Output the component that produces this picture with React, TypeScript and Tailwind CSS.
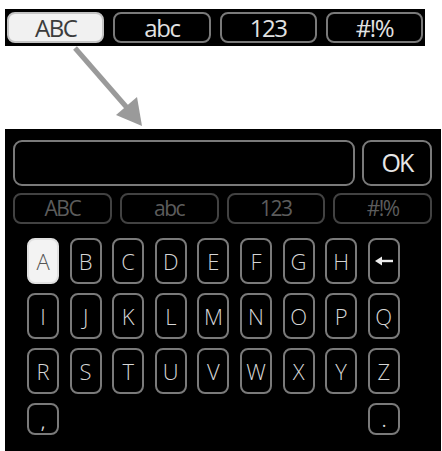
// On-screen keyboard: mode tabs on top, arrow pointing into the keypad panel

const TOP_TABS = ["ABC", "abc", "123", "#!%"]

const ROWS = [
  ["A", "B", "C", "D", "E", "F", "G", "H", "←"],
  ["I", "J", "K", "L", "M", "N", "O", "P", "Q"],
  ["R", "S", "T", "U", "V", "W", "X", "Y", "Z"],
]

const font = { fontFamily: '"Open Sans", "Liberation Sans", sans-serif' }

function BackArrow() {
  return (
    <svg width="20" height="12" viewBox="0 0 20 12">
      <line x1="7" y1="6" x2="19" y2="6" stroke="#ececec" strokeWidth="2.4" />
      <polygon points="1,6 8,1.5 8,10.5" fill="#ececec" />
    </svg>
  )
}

function Key({ label, active }: { label: string; active?: boolean }) {
  return (
    <div
      className={
        active
          ? "flex h-[46px] w-[32px] items-center justify-center rounded-[8px] border-2 border-[#e0e0e0] bg-[#f3f3f3] text-[22px] font-light text-[#555]"
          : "flex h-[46px] w-[32px] items-center justify-center rounded-[8px] border-2 border-[#7a7a7a] text-[22px] font-light text-[#d6d6d6]"
      }
    >
      {label === "←" ? <BackArrow /> : label}
    </div>
  )
}

export default function App() {
  return (
    <main className="h-[451px] w-[442px] overflow-hidden bg-white antialiased" style={font}>
      {/* top mode bar */}
      <div className="ml-[5px] mt-[9px] grid h-[37px] w-[420px] grid-cols-4 gap-[9px] bg-black px-[2px] pt-[3px]">
        {TOP_TABS.map((t, i) => (
          <div
            key={t}
            className={
              i === 0
                ? "flex h-[31px] items-center justify-center rounded-[8px] border-2 border-[#c4c4c4] bg-[#f1f1f1] text-[24px] tracking-[-1.5px] text-[#3c3c3c]"
                : "flex h-[31px] items-center justify-center rounded-[8px] border-2 border-[#7a7a7a] text-[24px] tracking-[-1.5px] text-[#e2e2e2]"
            }
          >
            {t}
          </div>
        ))}
      </div>

      {/* arrow */}
      <svg width="442" height="83" className="block">
        <line x1="75" y1="2" x2="129" y2="64" stroke="#9a9a9a" strokeWidth="5" />
        <polygon points="142,80 116,69 137,51" fill="#9a9a9a" />
      </svg>

      {/* keypad panel */}
      <section className="ml-[5px] h-[322px] w-[436px] bg-black pl-[8px] pr-[9px] pt-[11px]">
        <div className="flex gap-[7px]">
          <div className="h-[46px] flex-1 rounded-[9px] border-2 border-[#7a7a7a]" />
          <div className="flex h-[46px] w-[70px] items-center justify-center rounded-[9px] border-2 border-[#7a7a7a] text-[25px] tracking-[-2px] text-[#e6e6e6]">
            OK
          </div>
        </div>

        <div className="mt-[7px] grid grid-cols-4 gap-[8px]">
          {TOP_TABS.map((t) => (
            <div
              key={t}
              className="flex h-[31px] items-center justify-center rounded-[8px] border-2 border-[#424242] text-[21px] tracking-[-1.5px] text-[#5c5c5c]"
            >
              {t}
            </div>
          ))}
        </div>

        <div className="ml-[14px] mt-[14px] flex flex-col gap-[9px]">
          {ROWS.map((row, r) => (
            <div key={r} className="flex gap-[10.6px]">
              {row.map((k, c) => (
                <Key key={k} label={k} active={r === 0 && c === 0} />
              ))}
            </div>
          ))}
          <div className="flex w-[373px] justify-between">
            <div className="flex h-[32px] w-[32px] items-end justify-center rounded-[8px] border-2 border-[#7a7a7a] pb-[2px] text-[18px] leading-none text-[#d6d6d6]">
              ,
            </div>
            <div className="flex h-[32px] w-[32px] items-end justify-center rounded-[8px] border-2 border-[#7a7a7a] pb-[4px] text-[18px] leading-none text-[#d6d6d6]">
              .
            </div>
          </div>
        </div>
      </section>
    </main>
  )
}
